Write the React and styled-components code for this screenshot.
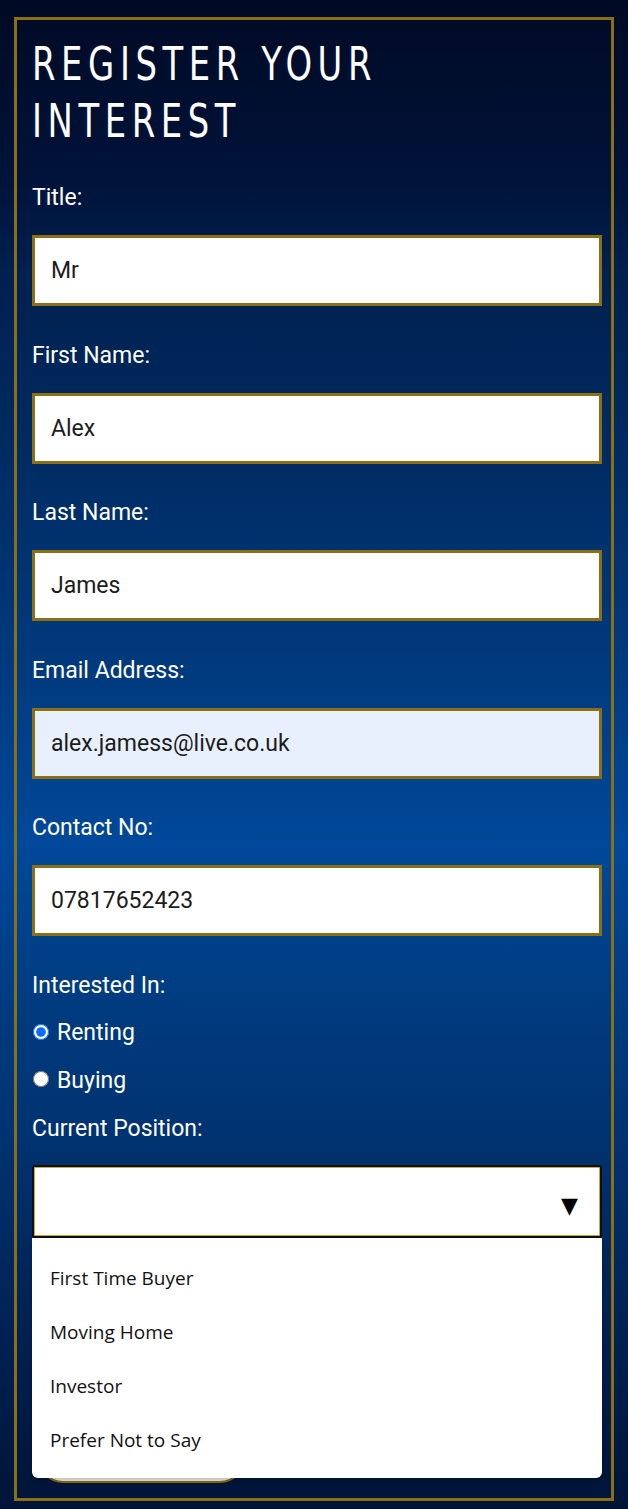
import React from "react";
import styled, { createGlobalStyle } from "styled-components";

const GlobalStyle = createGlobalStyle`
  html, body {
    margin: 0;
    padding: 0;
  }
  body {
    min-height: 1509px;
    background: linear-gradient(
      180deg,
      #000a24 0%,
      #00133a 12%,
      #00204f 18%,
      #00295e 28%,
      #003b7f 45%,
      #00489a 56%,
      #003d82 65%,
      #00326f 76%,
      #002458 86%,
      #001438 100%
    );
    font-family: Roboto, "Liberation Sans", sans-serif;
  }
`;

const Page = styled.div`
  padding: 17px 14px 8px 14px;
`;

const FormBox = styled.form`
  position: relative;
  width: 600px;
  border: 3px solid #8a6f15;
  padding: 15px 9px 15px 15px;
  box-sizing: border-box;
`;

const Heading = styled.h1`
  margin: 0 0 35px 0;
  font-family: "Liberation Sans Narrow", "DejaVu Sans Condensed", "Liberation Sans", sans-serif;
  font-stretch: condensed;
  font-weight: 400;
  font-size: 47px;
  line-height: 57px;
  letter-spacing: 7px;
  color: #ffffff;
  text-transform: uppercase;
  transform: scaleX(0.8);
  transform-origin: left center;
  white-space: nowrap;
`;

const Field = styled.div`
  margin-bottom: 35.5px;
`;

const Label = styled.label`
  display: block;
  color: #ffffff;
  font-size: 23px;
  line-height: 28px;
  margin-top: ${(p) => p.top || 0}px;
  margin-bottom: ${(p) => p.gap ?? 23}px;
`;

const TextInput = styled.input`
  display: block;
  width: 570px;
  height: 71px;
  box-sizing: border-box;
  border: 3px solid #8a6f15;
  padding: 0 16px;
  font-family: Roboto, "Liberation Sans", sans-serif;
  font-size: 23px;
  color: #1c1c1c;
  background: ${(p) => (p.$autofill ? "#e8f0fe" : "#ffffff")};
  outline: none;
  border-radius: 0;
`;

const RadioRow = styled.label`
  display: flex;
  align-items: center;
  gap: 8px;
  color: #ffffff;
  font-size: 23px;
  line-height: 28px;
  margin-top: 19.5px;
`;

const Radio = styled.input`
  width: 16px;
  height: 16px;
  margin: -3px 0 0 1px;
  accent-color: #0a6cff;
`;

const SelectWrap = styled.div`
  position: relative;
  width: 570px;
`;

const SelectBox = styled.div`
  display: flex;
  align-items: center;
  justify-content: flex-end;
  height: 73px;
  box-sizing: border-box;
  padding: 8px 22px 0 0;
  background: #ffffff;
  border: 2px solid #101010;
  border-radius: 3px;
  box-shadow: inset 0 0 0 1px #c8a83e;
  font-family: "DejaVu Sans", sans-serif;
  font-size: 22px;
  color: #000;
`;

const OptionList = styled.ul`
  position: absolute;
  left: 0;
  right: 0;
  top: 73px;
  margin: 0;
  padding: 13px 0 11px 0;
  list-style: none;
  background: #ffffff;
  border-radius: 0 0 6px 6px;
  box-shadow: 0 3px 8px rgba(0, 0, 0, 0.25);
  z-index: 2;
`;

const OptionItem = styled.li`
  padding: 0 18px;
  height: 54px;
  display: flex;
  align-items: center;
  font-family: "Open Sans", "Noto Sans", sans-serif;
  font-size: 19px;
  color: #111111;
`;

// sits behind the open option list, only its lower rim shows
const SubmitButton = styled.button`
  display: block;
  margin: 195px 0 0 6px;
  width: 207px;
  height: 50px;
  border: 2px solid #8a6f15;
  border-radius: 25px;
  background: #f7f3e6;
`;

const fields = [
  { label: "Title:", value: "Mr" },
  { label: "First Name:", value: "Alex" },
  { label: "Last Name:", value: "James" },
  { label: "Email Address:", value: "alex.jamess@live.co.uk", autofill: true },
  { label: "Contact No:", value: "07817652423" },
];

const positions = ["First Time Buyer", "Moving Home", "Investor", "Prefer Not to Say"];

export default function App() {
  return (
    <Page>
      <GlobalStyle />
      <FormBox onSubmit={(e) => e.preventDefault()}>
        <Heading>
          Register your
          <br />
          interest
        </Heading>

        {fields.map((f) => (
          <Field key={f.label}>
            <Label>{f.label}</Label>
            <TextInput defaultValue={f.value} $autofill={f.autofill} />
          </Field>
        ))}

        <Label gap={0}>Interested In:</Label>
        <RadioRow>
          <Radio type="radio" name="interest" defaultChecked />
          Renting
        </RadioRow>
        <RadioRow>
          <Radio type="radio" name="interest" />
          Buying
        </RadioRow>

        <Label top={20} gap={22}>Current Position:</Label>
        <SelectWrap>
          <SelectBox>▼</SelectBox>
          <OptionList>
            {positions.map((p) => (
              <OptionItem key={p}>{p}</OptionItem>
            ))}
          </OptionList>
        </SelectWrap>
        <SubmitButton type="submit" aria-label="Submit" />
      </FormBox>
    </Page>
  );
}
